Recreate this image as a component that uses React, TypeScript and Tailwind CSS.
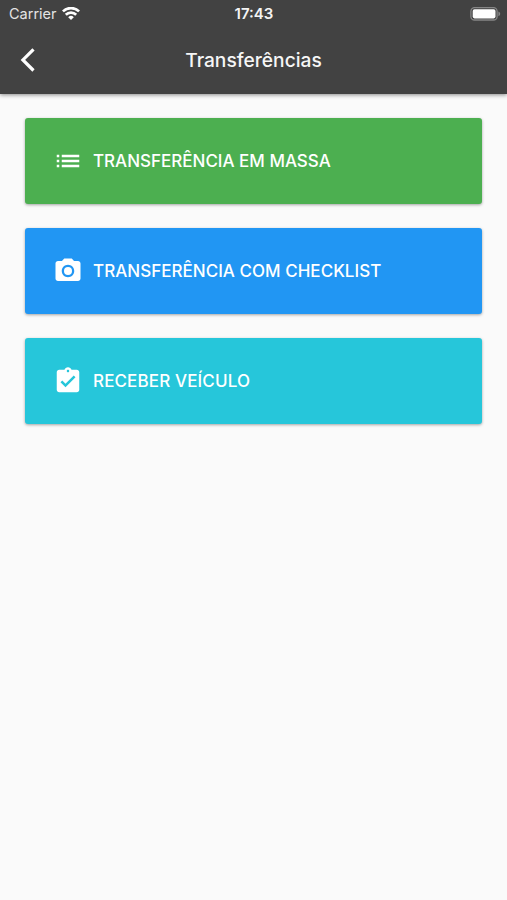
import type { ReactNode } from 'react';
import { MdAssignmentTurnedIn, MdList } from 'react-icons/md';

interface TransferAction {
  label: string;
  color: string;
  tracking: string;
  icon: ReactNode;
}

function CameraIcon() {
  return (
    <svg viewBox="0 0 24 24" className="size-[30px]" fill="currentColor">
      <circle cx="12" cy="12" r="3.2" />
      <path d="M9 2 7.17 4H4c-1.1 0-2 .9-2 2v12c0 1.1.9 2 2 2h16c1.1 0 2-.9 2-2V6c0-1.1-.9-2-2-2h-3.17L15 2H9zm3 15c-2.76 0-5-2.24-5-5s2.24-5 5-5 5 2.24 5 5-2.24 5-5 5z" />
    </svg>
  );
}

const actions: TransferAction[] = [
  {
    label: 'TRANSFERÊNCIA EM MASSA',
    color: 'bg-[#4caf50]',
    tracking: 'tracking-normal',
    icon: <MdList className="size-[30px]" />,
  },
  {
    label: 'TRANSFERÊNCIA COM CHECKLIST',
    color: 'bg-[#2196f3]',
    tracking: 'tracking-[0.03px]',
    icon: <CameraIcon />,
  },
  {
    label: 'RECEBER VEÍCULO',
    color: 'bg-[#26c6da]',
    tracking: 'tracking-[0.13px]',
    icon: <MdAssignmentTurnedIn className="size-[30px]" />,
  },
];

function StatusBar() {
  return (
    <div className="grid h-[27px] grid-cols-3 items-center pr-[6px] pl-[9px]">
      <div className="flex items-center gap-[5px]">
        <span className="text-[14.5px] text-[#e4e4e4]">Carrier</span>
        <svg viewBox="0 0 18 14" className="h-[14px] w-[18px]" fill="none" stroke="currentColor">
          <path d="M.9 4.400a11.600 11.600 0 0 1 16.200 0M3.800 7.700a7.400 7.400 0 0 1 10.400 0" strokeWidth="2.700" />
          <path d="M6.200 10.200a4 4 0 0 1 5.600 0L9 13.100z" fill="currentColor" stroke="none" />
        </svg>
      </div>
      <span className="pt-[2px] pr-[2px] text-center text-[15px] font-semibold text-[#f4f4f4]">17:43</span>
      <svg viewBox="0 0 31 14" className="h-[14px] w-[31px] justify-self-end">
        <rect x="0.900" y="0.600" width="26.200" height="12.400" rx="3.600" fill="none" stroke="#868686" strokeWidth="1.300" />
        <rect x="2.700" y="2.200" width="22.800" height="9.200" rx="1.800" fill="#fff" />
        <path d="M28.400 4.600c2.400.8 2.400 3.800 0 4.600z" fill="#868686" />
      </svg>
    </div>
  );
}

export default function App() {
  return (
    <div className="min-h-screen bg-[#fafafa] font-['Inter','Liberation_Sans',sans-serif] text-white">
      <header className="h-[94px] bg-[#424242] shadow-[0_1px_4px_rgba(0,0,0,0.45)]">
        <StatusBar />
        <div className="grid h-[66px] grid-cols-[56px_1fr_56px] items-center">
          <button type="button" aria-label="Voltar" className="flex justify-center">
            <svg viewBox="0 0 16 26" className="h-[26px] w-[16px]" fill="none" stroke="currentColor">
              <path d="M13.500 2.300 2.900 12.900l10.600 10.600" strokeWidth="3.200" />
            </svg>
          </button>
          <h1 className="text-center text-[19.200px] font-medium text-[#f6f6f6]">Transferências</h1>
        </div>
      </header>

      <main className="flex flex-col gap-[24px] px-[25px] pt-[24px]">
        {actions.map(({ label, color, tracking, icon }) => (
          <button
            key={label}
            type="button"
            className={`flex h-[86px] items-center gap-[10px] rounded-[3px] pl-[28px] text-[17px] font-medium shadow-[0_1px_3px_rgba(0,0,0,0.35)] ${color}`}
          >
            {icon}
            <span className={`pt-[2px] ${tracking}`}>{label}</span>
          </button>
        ))}
      </main>
    </div>
  );
}
